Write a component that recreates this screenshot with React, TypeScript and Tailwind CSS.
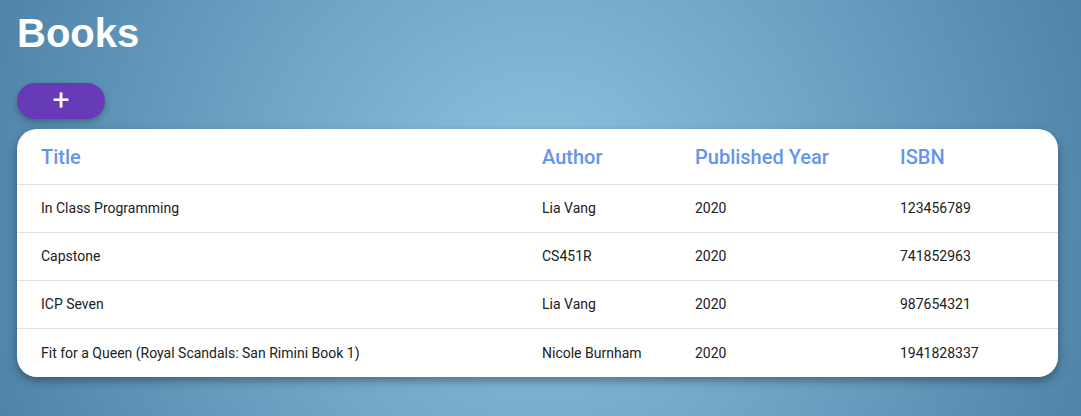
const books = [
  { title: "In Class Programming", author: "Lia Vang", year: "2020", isbn: "123456789" },
  { title: "Capstone", author: "CS451R", year: "2020", isbn: "741852963" },
  { title: "ICP Seven", author: "Lia Vang", year: "2020", isbn: "987654321" },
  {
    title: "Fit for a Queen (Royal Scandals: San Rimini Book 1)",
    author: "Nicole Burnham",
    year: "2020",
    isbn: "1941828337",
  },
];

const cols = "grid grid-cols-[501px_153px_205px_182px]";

const App = () => {
  return (
    <div className="min-h-[416px] w-full bg-[radial-gradient(circle_at_50%_50%,#8fc6e1_0%,#4e84a9_100%)] pl-[17px] pr-[23px] pt-[10px] pb-[39px] font-['Roboto',sans-serif]">
      <h1 className="font-['Liberation_Sans',Arial,sans-serif] text-[40px] font-bold leading-[46px] text-white">
        Books
      </h1>

      <button className="mt-[27px] flex h-[36px] w-[88px] items-center justify-center rounded-full bg-[#673ab7] pb-[2px] text-[30px] font-normal leading-none text-white shadow-[0_3px_6px_rgba(0,0,0,0.25)]">
        +
      </button>

      <div className="mt-[10px] overflow-hidden rounded-[20px] bg-white shadow-[0_4px_10px_rgba(0,0,0,0.35)]">
        <div className={`${cols} h-[56px] items-center border-b border-[#e0e0e0] text-[20px] font-medium text-[#6495ed]`}>
          <div className="pl-6">Title</div>
          <div className="pl-6">Author</div>
          <div className="pl-6">Published Year</div>
          <div className="pl-6">ISBN</div>
        </div>
        {books.map((book, i) => (
          <div
            key={book.isbn}
            className={`${cols} h-[48px] items-center text-[14px] text-[#212121] ${
              i < books.length - 1 ? "border-b border-[#e0e0e0]" : ""
            }`}
          >
            <div className="pl-6">{book.title}</div>
            <div className="pl-6">{book.author}</div>
            <div className="pl-6">{book.year}</div>
            <div className="pl-6">{book.isbn}</div>
          </div>
        ))}
      </div>
    </div>
  );
};

export default App;
